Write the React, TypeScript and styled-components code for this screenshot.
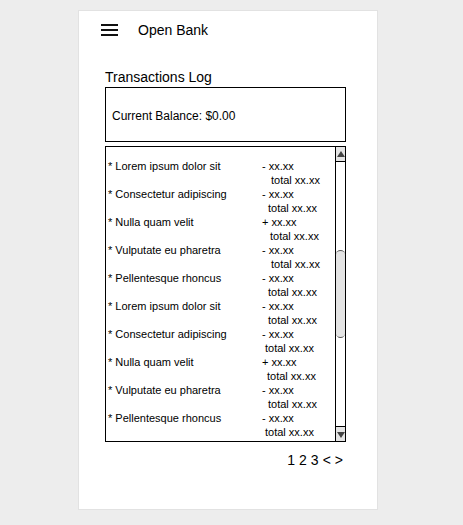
import React from "react";
import styled, { createGlobalStyle } from "styled-components";

const transactions = [
  { name: "Lorem ipsum dolor sit", amount: "- xx.xx", indent: 9 },
  { name: "Consectetur adipiscing", amount: "- xx.xx", indent: 6 },
  { name: "Nulla quam velit", amount: "+ xx.xx", indent: 8 },
  { name: "Vulputate eu pharetra", amount: "- xx.xx", indent: 9 },
  { name: "Pellentesque rhoncus", amount: "- xx.xx", indent: 6 },
  { name: "Lorem ipsum dolor sit", amount: "- xx.xx", indent: 6 },
  { name: "Consectetur adipiscing", amount: "- xx.xx", indent: 3 },
  { name: "Nulla quam velit", amount: "+ xx.xx", indent: 5 },
  { name: "Vulputate eu pharetra", amount: "- xx.xx", indent: 6 },
  { name: "Pellentesque rhoncus", amount: "- xx.xx", indent: 3 },
];

const GlobalStyle = createGlobalStyle`
  html, body {
    margin: 0;
    background: #ededed;
    font-family: "Liberation Sans", Arial, sans-serif;
    color: #000;
  }
`;

const Card = styled.div`
  box-sizing: border-box;
  width: 300px;
  height: 500px;
  margin: 10px 0 0 78px;
  background: #fff;
  border: 1px solid #e2e2e2;
`;

const Header = styled.header`
  display: flex;
  align-items: center;
  gap: 20px;
  height: 38px;
  padding-left: 22px;
`;

const Brand = styled.span`
  font-size: 14px;
`;

const Content = styled.main`
  display: flex;
  flex-direction: column;
  padding: 20px 31px 0 26px;
`;

const Title = styled.h2`
  margin: 0 0 2px;
  font-size: 14px;
  font-weight: normal;
  line-height: 16px;
`;

const BalanceBox = styled.div`
  box-sizing: border-box;
  display: flex;
  align-items: center;
  height: 55px;
  padding: 2px 0 0 6px;
  border: 1px solid #000;
  font-size: 12px;
`;

const LogBox = styled.div`
  box-sizing: border-box;
  display: flex;
  height: 296px;
  margin-top: 4px;
  border: 1px solid #000;
`;

const List = styled.ul`
  flex: 1;
  margin: 0;
  padding: 12px 0 0 2px;
  list-style: none;
  font-size: 11px;
  line-height: 14px;
`;

const Item = styled.li`
  display: grid;
  grid-template-columns: 154px 1fr;
`;

const Total = styled.span<{ $indent: number }>`
  grid-column: 2;
  padding-left: ${(p) => p.$indent}px;
`;

const Scrollbar = styled.div`
  display: flex;
  flex-direction: column;
  width: 9px;
  border-left: 1px solid #000;
`;

const ArrowButton = styled.div<{ $down?: boolean }>`
  display: flex;
  align-items: center;
  justify-content: center;
  height: 14px;
  background: #e4e4e4;
  ${(p) => (p.$down ? "border-top: 1px solid #000;" : "border-bottom: 1px solid #000;")}
`;

const Track = styled.div`
  flex: 1;
  padding-top: 88px;
`;

const Thumb = styled.div`
  height: 86px;
  background: #e4e4e4;
  border-top: 1px solid #555;
  border-bottom: 1px solid #555;
  border-radius: 5px;
`;

const Pager = styled.nav`
  display: flex;
  justify-content: flex-end;
  gap: 4px;
  margin-top: 10px;
  padding-right: 3px;
  font-size: 14px;
  line-height: 16px;
`;

function Hamburger() {
  return (
    <svg width="17" height="12" viewBox="0 0 17 12">
      <rect x="0" y="0" width="17" height="2" fill="#111" />
      <rect x="0" y="5" width="17" height="2" fill="#111" />
      <rect x="0" y="10" width="17" height="2" fill="#111" />
    </svg>
  );
}

function Arrow({ down }: { down?: boolean }) {
  return (
    <svg width="8" height="7" viewBox="0 0 8 7">
      <polygon points={down ? "0,1 8,1 4,7" : "0,6 8,6 4,0"} fill="#444" />
    </svg>
  );
}

export default function App() {
  return (
    <>
      <GlobalStyle />
      <Card>
        <Header>
          <Hamburger />
          <Brand>Open Bank</Brand>
        </Header>
        <Content>
          <Title>Transactions Log</Title>
          <BalanceBox>Current Balance: $0.00</BalanceBox>
          <LogBox>
            <List>
              {transactions.map((t, i) => (
                <Item key={i}>
                  <span>* {t.name}</span>
                  <span>{t.amount}</span>
                  <Total $indent={t.indent}>total xx.xx</Total>
                </Item>
              ))}
            </List>
            <Scrollbar>
              <ArrowButton>
                <Arrow />
              </ArrowButton>
              <Track>
                <Thumb />
              </Track>
              <ArrowButton $down>
                <Arrow down />
              </ArrowButton>
            </Scrollbar>
          </LogBox>
          <Pager>
            <span>1</span>
            <span>2</span>
            <span>3</span>
            <span>&lt;</span>
            <span>&gt;</span>
          </Pager>
        </Content>
      </Card>
    </>
  );
}
